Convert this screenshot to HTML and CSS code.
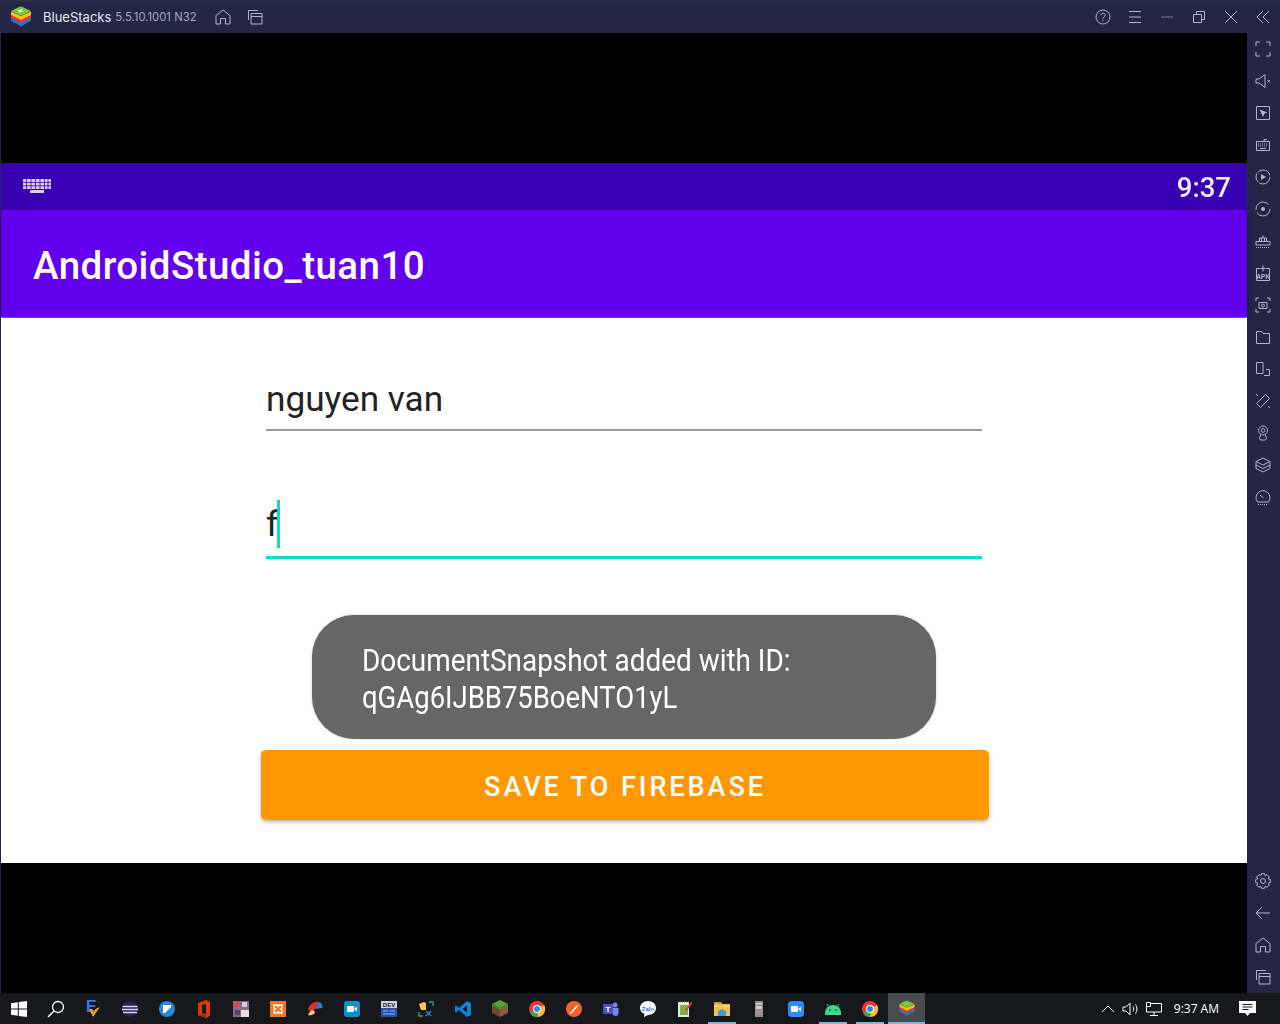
FILE: index.html
```html
<!DOCTYPE html>
<html lang="en">
<head>
  <meta charset="UTF-8">
  <title>BlueStacks</title>
  <link rel="stylesheet" href="styles.css">
</head>
<body>
  <div class="titlebar">
    <svg class="logo" width="24" height="22" viewBox="0 0 24 22">
      <path d="M12 14l10-4v4.500l-10 6-10-6V10z" fill="#2b6fd8"/>
      <path d="M12 12l10-4.500v4l-10 5.500-10-5.500v-4z" fill="#e8352c"/>
      <path d="M12 10l10-4.500v3.500l-10 5-10-5V5.500z" fill="#f6c31c"/>
      <path d="M2 5l8-4c1-.5 2.500-.5 3.500 0l8.500 4-10 5z" fill="#7cc83c"/>
      <path d="M8 5l6-2-2 2 3 0-6 2 2-2z" fill="#fff"/>
    </svg>
    <span class="app-name">BlueStacks</span>
    <span class="app-version">5.5.10.1001 N32</span>
    <button class="tool tool-first"><svg width="20" height="20" viewBox="0 0 20 20"><path d="M3 17V8.500L10 3l7 5.500V17h-4.500v-5.500h-5V17z"/></svg></button>
    <button class="tool"><svg width="20" height="20" viewBox="0 0 20 20"><path d="M3.500 13V3.500H13M6 6.500h11V17H6zM6 9.500h11"/></svg></button>
    <div class="title-right">
      <button class="tool"><svg width="20" height="20" viewBox="0 0 20 20"><circle cx="10" cy="10" r="7"/><path d="M8 8.200c0-2.600 4.200-2.600 4.200 0 0 1.700-2.200 1.600-2.200 3.600M10 13v1"/></svg></button>
      <button class="tool"><svg width="20" height="20" viewBox="0 0 20 20"><path d="M4 4.500h12M4 10h12M4 15.500h12"/></svg></button>
      <button class="tool"><svg width="20" height="20" viewBox="0 0 20 20"><path d="M4 10h12" stroke-opacity=".6" stroke-width="1.500"/></svg></button>
      <button class="tool"><svg width="20" height="20" viewBox="0 0 20 20"><path d="M4.500 7.500h8v8h-8zM7.500 7.500V4.500h8v8h-3"/></svg></button>
      <button class="tool"><svg width="20" height="20" viewBox="0 0 20 20"><path d="M4 4l12 12M16 4L4 16"/></svg></button>
      <button class="tool"><svg width="20" height="20" viewBox="0 0 20 20"><path d="M10 4l-6 6 6 6M16 4l-6 6 6 6"/></svg></button>
    </div>
  </div>

  <div class="window">
    <div class="screen">
      <div class="letterbox-top"></div>
      <div class="statusbar">
        <svg class="kbd-icon" width="28" height="15" viewBox="0 0 28 15">
          <rect x="0" y="0" width="28" height="10" rx="1" fill="#d9cdf0"/>
          <path d="M0 3.500h28M0 6.800h28M3.500 0v10M8 0v10M12.500 0v10M17 0v10M21.500 0v10M25 0v10" stroke="#3d00a8" stroke-width=".8"/>
          <rect x="7" y="11" width="14" height="3" fill="#d9cdf0"/>
        </svg>
        <span class="clock">9:37</span>
      </div>
      <div class="appbar">AndroidStudio_tuan10</div>
      <div class="content">
        <div class="field">nguyen van</div>
        <div class="field field-active"><span class="field-text">f</span><span class="caret"></span></div>
        <button class="save-btn">SAVE TO FIREBASE</button>
        <div class="toast">
          <div class="toast-line">DocumentSnapshot added with ID:</div>
          <div class="toast-line toast-id">qGAg6IJBB75BoeNTO1yL</div>
        </div>
      </div>
    </div>

    <div class="sidebar">
      <button class="tool"><svg width="20" height="20" viewBox="0 0 20 20"><path d="M3 7V3h4M13 3h4v4M17 13v4h-4M7 17H3v-4"/></svg></button>
      <button class="tool"><svg width="20" height="20" viewBox="0 0 20 20"><path d="M3 8h3l6-4.500v13L6 12H3zM14.500 9l2.500 2.500M17 9l-2.500 2.500"/></svg></button>
      <button class="tool"><svg width="20" height="20" viewBox="0 0 20 20"><path d="M3.500 3.500h13v13h-13z"/><path class="solid" d="M6.500 6.500l8 3-3.200 1.300-1.300 3.200z"/></svg></button>
      <button class="tool"><svg width="20" height="20" viewBox="0 0 20 20"><path d="M3.500 6.500h13v9h-13zM11 6.500V4.500h3"/><path stroke-dasharray="1 1" d="M5 9h10M5 11h10"/><path d="M7 13.500h6"/></svg></button>
      <button class="tool"><svg width="20" height="20" viewBox="0 0 20 20"><circle cx="10" cy="10" r="7" stroke-dasharray="15 1.500 9 1.500 15 2"/><path class="solid" d="M8 7l5 3-5 3z"/></svg></button>
      <button class="tool"><svg width="20" height="20" viewBox="0 0 20 20"><circle cx="10" cy="10" r="7" stroke-dasharray="18 3 18 5"/><circle class="solid" cx="10" cy="10" r="2"/></svg></button>
      <button class="tool"><svg width="20" height="20" viewBox="0 0 20 20"><path d="M3 10.500h14v3.500H3zM6.500 10.500V7h7v3.500M8.500 10.500V7M11.500 10.500V7M10 7V4.500"/><path stroke-dasharray="1 1" d="M3 16.500h14"/></svg></button>
      <button class="tool"><svg width="20" height="20" viewBox="0 0 20 20"><path d="M7 5.500H3.500v12h13v-12H13M10 2.500v6M7.500 5.500h5"/><text x="10" y="15.500" class="apk-text">APK</text></svg></button>
      <button class="tool"><svg width="20" height="20" viewBox="0 0 20 20"><path d="M3 6V3h3M14 3h3v3M17 14v3h-3M6 17H3v-3M6 7.500h8v6H6z"/><circle cx="10" cy="10.500" r="1.500"/></svg></button>
      <button class="tool"><svg width="20" height="20" viewBox="0 0 20 20"><path d="M3.500 16.500v-12h5l1.500 2h6.500v10z"/></svg></button>
      <button class="tool"><svg width="20" height="20" viewBox="0 0 20 20"><path d="M3.500 3.500h6.500v11H3.500zM11 16.500h5.500v-6H13"/></svg></button>
      <button class="tool"><svg width="20" height="20" viewBox="0 0 20 20"><path d="M12.500 3.500l4 4-9 9-4-4zM3 3l2 2M17 17l-2-2"/></svg></button>
      <button class="tool"><svg width="20" height="20" viewBox="0 0 20 20"><circle cx="10" cy="7.500" r="4.500"/><circle cx="10" cy="7.500" r="1.800"/><path d="M7.500 12l-1 3.500 1 1.500h5l1-1.500-1-3.500"/></svg></button>
      <button class="tool"><svg width="20" height="20" viewBox="0 0 20 20"><path d="M10 3l7 3.500-7 3.500-7-3.500zM3 6.500v7l7 3.500 7-3.500v-7M3 10l7 3.500 7-3.500"/></svg></button>
      <button class="tool"><svg width="20" height="20" viewBox="0 0 20 20"><path d="M4.500 15a7 7 0 1 1 11 0zM7 8l3.500 3"/><path stroke-dasharray="1 1" d="M5 17.500h10"/></svg></button>
      <div class="sidebar-bottom">
        <button class="tool"><svg width="20" height="20" viewBox="0 0 20 20"><circle cx="10" cy="10" r="2.500"/><path d="M8.440 2.660h3.120l.62 2.070 1.910-1.020 2.200 2.200-1.020 1.910 2.070.62v3.120l-2.070.62 1.020 1.910-2.200 2.200-1.910-1.020-.62 2.070H8.440l-.62-2.070-1.910 1.020-2.200-2.200 1.020-1.910-2.070-.62V8.440l2.070-.62-1.020-1.910 2.200-2.200 1.910 1.020z"/></svg></button>
        <button class="tool"><svg width="20" height="20" viewBox="0 0 20 20"><path d="M17 10H3M9 4l-6 6 6 6"/></svg></button>
        <button class="tool"><svg width="20" height="20" viewBox="0 0 20 20"><path d="M3 17V8.500L10 3l7 5.500V17h-4.500v-5.500h-5V17z"/></svg></button>
        <button class="tool"><svg width="20" height="20" viewBox="0 0 20 20"><path d="M3.500 13V3.500H13M6 6.500h11V17H6zM6 9.500h11"/></svg></button>
      </div>
    </div>
  </div>

  <div class="taskbar">
    <div class="task task-start"><svg width="20" height="20" viewBox="0 0 20 20"><path fill="#fff" d="M2 4.300l6.800-1v6.300H2zM9.800 3.100L18 2v7.600H9.800zM2 10.500h6.800v6.300L2 15.800zM9.800 10.500H18V18l-8.200-1.100z"/></svg></div>
    <div class="task"><svg width="20" height="20" viewBox="0 0 20 20"><circle cx="12" cy="8" r="5.500" fill="none" stroke="#fff" stroke-width="1.300"/><path d="M8 12l-6 6" stroke="#fff" stroke-width="1.500"/></svg></div>
    <div class="task"><svg width="20" height="20" viewBox="0 0 20 20"><text x="3" y="13" class="ev-e">E</text><path d="M6 10l4 8 7-10-4.500 2-2 3.500-1-3.500z" fill="#f59a23"/></svg></div>
    <div class="task"><svg width="18" height="18" viewBox="0 0 18 18"><circle cx="9" cy="9" r="8" fill="#2c2255"/><path d="M1.500 6.500h15M1 9.500h16M2 12.500h14" stroke="#d8d6f0" stroke-width="1.300"/></svg></div>
    <div class="task"><svg width="18" height="18" viewBox="0 0 18 18"><circle cx="9" cy="9" r="8" fill="#2b88d8"/><path d="M5 5h8v8H5z" fill="#fff"/><path d="M7 13l6-6v6z" fill="#2b88d8"/></svg></div>
    <div class="task"><svg width="16" height="20" viewBox="0 0 16 20"><path d="M2 4l8-3 4 2v14l-4 2-8-3z" fill="#d83b01"/><path d="M6 6l4-1v10l-4-1z" fill="#17181c"/><path d="M2 16l8 3V15z" fill="#a4262c"/></svg></div>
    <div class="task"><svg width="16" height="16" viewBox="0 0 16 16"><rect width="16" height="16" fill="#8b6a7a"/><path d="M0 0h7v6H0z" fill="#d14a5c"/><path d="M8 9h8v7H8z" fill="#e8dfe2"/><path d="M2 9h5v5H2z" fill="#3a4a70"/><path d="M9 1h5v5H9z" fill="#c9d2e8"/></svg></div>
    <div class="task"><svg width="16" height="16" viewBox="0 0 16 16"><rect width="16" height="16" fill="#f2791f"/><path d="M4 4h3l1 1.500L9 4h3v3l-1.500 1L12 9v3H9L8 10.500 7 12H4V9l1.500-1L4 7z" fill="none" stroke="#fff" stroke-width="1.300"/></svg></div>
    <div class="task"><svg width="18" height="18" viewBox="0 0 18 18"><path d="M2 10C3 4 9 1 13 2l-4 7 -3 3z" fill="#d8342b"/><path d="M13 2c3 1 4 4 3 6l-7 1z" fill="#2f7fd1"/><path d="M2 15c1-3 3-5 5-5l2 2c0 2-3 4-7 3z" fill="#f4c27a"/></svg></div>
    <div class="task"><svg width="16" height="16" viewBox="0 0 16 16"><rect width="16" height="16" rx="3" fill="#0e8fc9"/><path d="M3 5h7v6H3zM10.500 7.500L13 5.500v5l-2.500-2z" fill="#fff"/></svg></div>
    <div class="task"><svg width="16" height="16" viewBox="0 0 16 16"><rect width="16" height="16" fill="#3849a8"/><rect width="16" height="7" fill="#cfd2e4"/><text x="8" y="6" class="dev-text">DEV</text><path d="M2 10h5M9 10h5M2 13h12" stroke="#4fa4ea" stroke-width="1.500"/></svg></div>
    <div class="task"><svg width="16" height="16" viewBox="0 0 16 16"><path d="M1 3l5-2 2 1v7H3z" fill="#f7c948"/><path d="M1 11v4h4M11 1h4v4" fill="none" stroke="#3fa34d" stroke-width="1.300"/><path d="M8 10l5 5M13 10l-5 5" stroke="#3b82d6" stroke-width="1.300"/></svg></div>
    <div class="task"><svg width="18" height="18" viewBox="0 0 18 18"><path d="M13 1l4 2v12l-4 2L5 10l-3 2.500L1 11.500V6.500L2 5.500 5 8z" fill="#0a84d6"/><path d="M13 5.500L8.500 9 13 12.500z" fill="#17181c"/></svg></div>
    <div class="task"><svg width="16" height="17" viewBox="0 0 16 17"><path d="M8 0l8 4-8 4-8-4z" fill="#5c9e3a"/><path d="M0 4l8 4v9l-8-4z" fill="#6b4a2e"/><path d="M16 4L8 8v9l8-4z" fill="#86603c"/><path d="M0 4l8 4 8-4v2L8 10 0 6z" fill="#4b8a2c"/></svg></div>
    <div class="task"><svg width="16" height="16" viewBox="0 0 16 16"><circle cx="8" cy="8" r="8" fill="#e33b2e"/><path d="M8 8L1 12a8 8 0 0 0 8 4z" fill="#35a853"/><path d="M8 8l7-4a8 8 0 0 1-6 12z" fill="#fbc02d"/><circle cx="8" cy="8" r="4" fill="#fff"/><circle cx="8" cy="8" r="3" fill="#3b82e6"/></svg></div>
    <div class="task"><svg width="16" height="16" viewBox="0 0 16 16"><circle cx="8" cy="8" r="8" fill="#f4622e"/><path d="M4 12l7-8 1 1-7 8z" fill="#fff"/></svg></div>
    <div class="task"><svg width="16" height="16" viewBox="0 0 16 16"><circle cx="12" cy="4" r="2.500" fill="#7b83eb"/><path d="M9 7h6.500v5a3 3 0 0 1-6 0z" fill="#7b83eb"/><rect x="0" y="3" width="10" height="10" rx="1" fill="#4b53bc"/><text x="5" y="11" class="teams-text">T</text></svg></div>
    <div class="task"><svg width="16" height="16" viewBox="0 0 16 16"><path d="M8 0c4.500 0 8 3 8 7s-3.500 7-8 7l-4 2 .5-3C2 12 0 10 0 7c0-4 3.500-7 8-7z" fill="#fff"/><text x="8" y="9.500" class="zalo-text">Zalo</text></svg></div>
    <div class="task"><svg width="16" height="17" viewBox="0 0 16 17"><path d="M1 2h11v15H1z" fill="#e8e8dc"/><path d="M3 5h8v10H3z" fill="#7cb342"/><path d="M1 1.500h11" stroke="#444" stroke-dasharray="1 1" stroke-width="1.500"/><path d="M8 10l6-8 1.500 1-6 8z" fill="#d8432b"/></svg></div>
    <div class="task task-open"><svg width="18" height="16" viewBox="0 0 18 16"><path d="M1 1h7l1 2h8v12H1z" fill="#f2c14e"/><path d="M1 1h7l1 2H1z" fill="#d89a2b"/><path d="M1 5h16v1H1z" fill="#fbe08a"/><path d="M5 15v-5l4-2 4 2v5z" fill="#3f9ad6"/></svg></div>
    <div class="task"><svg width="8" height="16" viewBox="0 0 8 16"><rect width="8" height="16" fill="#8d8d8a"/><rect x="1" y="2" width="6" height="1.500" fill="#d2d2d0"/><rect x="1" y="5" width="6" height="3" fill="#cfcfcd"/><rect x="1" y="10" width="6" height="4" fill="#b08f8f"/></svg></div>
    <div class="task"><svg width="16" height="16" viewBox="0 0 16 16"><rect width="16" height="16" rx="4" fill="#2d8cff"/><rect x="3" y="5" width="7" height="6" rx="1" fill="#fff"/><path d="M10.500 7.500L13 5.500v5l-2.500-2z" fill="#fff"/></svg></div>
    <div class="task task-open"><svg width="16" height="12" viewBox="0 0 16 12"><path d="M0 10a8 8 0 0 1 16 0v2H0z" fill="#3ddc84"/><path d="M3.500 3.500L2 1M12.500 3.500L14 1" stroke="#3ddc84" stroke-width="1"/><circle cx="5" cy="7" r=".8" fill="#17181c"/><circle cx="11" cy="7" r=".8" fill="#17181c"/></svg></div>
    <div class="task task-open"><svg width="16" height="16" viewBox="0 0 16 16"><circle cx="8" cy="8" r="8" fill="#e33b2e"/><path d="M8 8L1 12a8 8 0 0 0 8 4z" fill="#35a853"/><path d="M8 8l7-4a8 8 0 0 1-6 12z" fill="#fbc02d"/><circle cx="8" cy="8" r="4" fill="#fff"/><circle cx="8" cy="8" r="3" fill="#3b82e6"/></svg></div>
    <div class="task task-open task-current"><svg width="18" height="17" viewBox="0 0 24 22"><path d="M12 14l10-4v4.500l-10 6-10-6V10z" fill="#2b6fd8"/><path d="M12 12l10-4.500v4l-10 5.500-10-5.500v-4z" fill="#e8352c"/><path d="M12 10l10-4.500v3.500l-10 5-10-5V5.500z" fill="#f6c31c"/><path d="M2 5l8-4c1-.5 2.500-.5 3.500 0l8.500 4-10 5z" fill="#7cc83c"/></svg></div>
    <div class="tray">
      <svg width="14" height="14" viewBox="0 0 14 14"><path d="M1 10l6-6 6 6" fill="none" stroke="#fff"/></svg>
      <svg class="tray-sound" width="18" height="16" viewBox="0 0 18 16"><path d="M1 6h3l4-4v12l-4-4H1zM11 5.500c1 1.500 1 3.500 0 5M13.500 3.500c2 2.500 2 6.500 0 9" fill="none" stroke="#fff"/></svg>
      <svg width="17" height="16" viewBox="0 0 17 16"><path d="M1.500 1.500h4v4h-4zM5.500 2.500h11V11H1.500V5.500M9 11v3M5 14.500h8" fill="none" stroke="#fff"/></svg>
      <span class="tray-clock">9:37 AM</span>
      <svg class="notify" width="17" height="17" viewBox="0 0 17 17"><path fill="#fff" d="M0 1h17v12h-6l-2.500 3L6 13H0z"/><path d="M3.500 4.500h10M3.500 7h10M3.500 9.500h6" stroke="#17181c"/></svg>
    </div>
  </div>
</body>
</html>
```

FILE: styles.css
```css
* {
  box-sizing: border-box;
}
html, body {
  margin: 0;
  height: 100%;
}
body {
  width: 1280px;
  height: 1024px;
  overflow: hidden;
  background: #232745;
  font-family: Roboto, sans-serif;
  display: flex;
  flex-direction: column;
}
button {
  border: none;
  background: none;
  padding: 0;
  font-family: inherit;
}

/* title bar */
.titlebar {
  height: 33px;
  flex: none;
  display: flex;
  align-items: center;
  padding-left: 9px;
  padding-right: 1px;
  background: #232745;
  border-top: 1px solid #2e3252;
}
.logo {
  flex: none;
}
.app-name {
  margin-left: 10px;
  font-family: Inter, sans-serif;
  font-size: 13px;
  color: #e6e8f4;
}
.app-version {
  margin-left: 4px;
  font-family: Inter, sans-serif;
  font-size: 11.300px;
  color: #a4a6bb;
}
.tool {
  width: 32px;
  height: 32px;
  flex: none;
  display: flex;
  align-items: center;
  justify-content: center;
}
.tool-first {
  margin-left: 10px;
}
.tool svg path, .tool svg circle {
  fill: none;
  stroke: #b2b4ca;
  stroke-width: 1;
}
.tool svg .solid {
  fill: #b2b4ca;
  stroke: none;
}
.title-right {
  margin-left: auto;
  display: flex;
}
.apk-text {
  font-family: "Liberation Sans", sans-serif;
  font-size: 6.500px;
  font-weight: bold;
  text-anchor: middle;
  fill: #b2b4ca;
}

/* window */
.window {
  height: 960px;
  flex: none;
  display: flex;
  padding-left: 1px;
}
.screen {
  width: 1246px;
  background: #000;
  display: flex;
  flex-direction: column;
}
.letterbox-top {
  height: 130px;
}
.statusbar {
  height: 47px;
  background: #3700b3;
  display: flex;
  align-items: center;
  justify-content: space-between;
  padding: 0 16px 0 22px;
}
.kbd-icon {
  filter: blur(.5px);
}
.clock {
  padding-top: 2px;
  color: #f2edfa;
  font-size: 27.500px;
  font-weight: 500;
  filter: blur(.3px);
}
.appbar {
  height: 108px;
  background: #6200ee;
  border-bottom: 1px solid #7f3cf0;
  padding: 3px 0 0 32px;
  display: flex;
  align-items: center;
  color: #fff;
  font-size: 38.500px;
  font-weight: 500;
  letter-spacing: .45px;
  position: relative;
  box-shadow: 0 3px 5px rgba(0, 0, 0, .3);
}
.content {
  height: 545px;
  background: #fff;
  position: relative;
  display: flex;
  flex-direction: column;
  align-items: center;
}
.field {
  width: 716px;
  height: 62px;
  margin-top: 51px;
  border-bottom: 2px solid #9b9b9b;
  font-size: 35.200px;
  line-height: 60px;
  color: #222;
}
.field-active {
  margin-top: 66px;
  border-bottom: 3px solid #0adcc8;
  display: flex;
  line-height: 54px;
}
.caret {
  width: 3px;
  height: 48px;
  margin-top: 3px;
  margin-left: -1.500px;
  background: #0adcc8;
}
.save-btn {
  width: 728px;
  height: 70px;
  margin-top: 191px;
  margin-left: 2px;
  padding-top: 3px;
  background: #ff9800;
  border-radius: 5px;
  color: #fff;
  font-size: 27px;
  font-weight: 500;
  letter-spacing: 2.950px;
  box-shadow: 0 2px 4px rgba(0, 0, 0, .3);
}
.toast {
  position: absolute;
  left: 311px;
  top: 297px;
  width: 624px;
  height: 124px;
  padding: 27px 0 0 50px;
  background: #666;
  border-radius: 42px;
  color: #fff;
  box-shadow: 0 0 2px rgba(0, 0, 0, .3);
}
.toast-line {
  font-size: 32px;
  line-height: 37px;
  white-space: nowrap;
  transform: scaleX(.872);
  transform-origin: left;
  filter: blur(.3px);
}
.toast-id {
  transform: scaleX(.858);
}

/* bluestacks side bar */
.sidebar {
  width: 33px;
  display: flex;
  flex-direction: column;
  background: #232745;
}
.sidebar-bottom {
  margin-top: auto;
}

/* windows task bar */
.taskbar {
  height: 31px;
  flex: none;
  display: flex;
  align-items: stretch;
  background: #17181c;
}
.task {
  width: 37px;
  flex: none;
  display: flex;
  align-items: center;
  justify-content: center;
}
.task-open {
  background: linear-gradient(#76b9ed, #76b9ed) bottom center / 28px 2px no-repeat;
}
.task-current {
  background: linear-gradient(#76b9ed, #76b9ed) bottom center / 100% 2px no-repeat, #4a4b4f;
}
.tray {
  margin-left: auto;
  display: flex;
  align-items: center;
  gap: 7px;
  padding-right: 24px;
  color: #fff;
}
.tray-sound {
  margin-right: -2px;
}
.tray-clock {
  font-family: "Open Sans", sans-serif;
  font-size: 12px;
  margin-left: 5px;
  margin-right: 13px;
}
.ev-e {
  font-family: "Liberation Sans", sans-serif;
  font-size: 16px;
  font-weight: bold;
  fill: #2f7fe0;
}
.dev-text {
  font-family: "Liberation Sans", sans-serif;
  font-size: 6px;
  font-weight: bold;
  text-anchor: middle;
  fill: #222;
}
.teams-text {
  font-family: "Liberation Sans", sans-serif;
  font-size: 8px;
  font-weight: bold;
  text-anchor: middle;
  fill: #fff;
}
.zalo-text {
  font-family: "Liberation Sans", sans-serif;
  font-size: 6px;
  font-weight: bold;
  text-anchor: middle;
  fill: #2b7de9;
}
```
